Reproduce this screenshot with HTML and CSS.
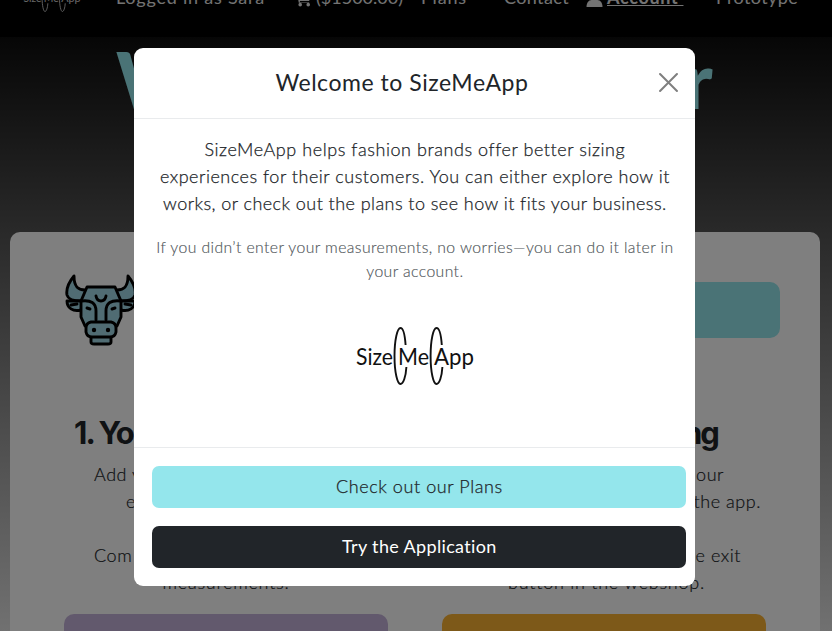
FILE: index.html
```html
<!DOCTYPE html>
<html lang="en">
<head>
<meta charset="utf-8">
<title>SizeMeApp</title>
<link rel="stylesheet" href="styles.css">
</head>
<body>
<svg class="defs" aria-hidden="true">
  <symbol id="logo" viewBox="0 0 120 58">
    <g fill="none" stroke="currentColor" stroke-width="1.9">
      <path d="M50.600 18C49.800 7 48 1 45.500 1C42.300 1 39.500 13 39.500 29S42.300 57 45.500 57C48.200 57 50.800 50 51.400 40"/>
      <path d="M86.800 18C86 7 84.200 1 81.500 1C78.300 1 75.600 13 75.600 29S78.300 57 81.500 57C84.300 57 86.800 50 87.400 40"/>
    </g>
    <g class="logo-text">
      <text x="1" y="38" textLength="37" lengthAdjust="spacingAndGlyphs">Size</text>
      <text x="43" y="38" textLength="31" lengthAdjust="spacingAndGlyphs">Me</text>
      <text x="79" y="38" textLength="40" lengthAdjust="spacingAndGlyphs">App</text>
    </g>
  </symbol>
</svg>
<div class="page">
  <nav class="nav">
    <svg class="nav-logo"><use href="#logo"/></svg>
    <span class="user">Logged in as Sara</span>
    <span class="cart"><svg viewBox="0 0 18 16"><path d="M0 0h3l1 2h13l-2 8H5l.5 1.500H15V12H4L2 1.500H0z"/><circle cx="5.500" cy="14" r="1.900"/><circle cx="14" cy="14" r="1.900"/></svg>($1500.00)</span>
    <span class="plans">Plans</span>
    <span class="contact">Contact</span>
    <span class="account"><svg viewBox="0 0 16 16"><circle cx="8" cy="4" r="4"/><path d="M0 16c0-4 2-7 5-7h6c3 0 5 3 5 7z"/></svg><b>Account&nbsp;</b></span>
    <span>Prototype</span>
  </nav>
  <header class="hero"><span>W</span><span>r</span></header>
  <main class="card">
    <div class="card-top">
      <svg class="bull" viewBox="0 0 72 72">
        <g fill="#a0d8e6" stroke="#000" stroke-width="2.900" stroke-linejoin="round" stroke-linecap="round">
          <path d="M20 16C14 16 9 14 9 2C4 8 1 15 2 21C3 25 8 27 16 27"/>
          <path d="M52 16C58 16 63 14 63 2C68 8 71 15 70 21C69 25 64 27 56 27"/>
          <path d="M17 27H2C2 34 8 38 16 36M55 27H70C70 34 64 38 56 36"/>
          <path d="M22 13H50L56 27V43L52 52H20L16 43V27Z"/>
          <path d="M26 62V68Q26 70 29 70H43Q46 70 46 68V62Z"/>
          <path d="M26 48H46Q51 49 51 54V58Q50 63 45 63H27Q22 63 21 58V54Q21 49 26 48Z"/>
          <path d="M31 22Q32 27 36 27T41 22M16 27Q31 25 31 37V46M56 27Q41 25 41 37V46M6 31L12 30M66 31L60 30" fill="none"/>
          <path d="M22 34L25 35M50 34L47 35"/>
        </g>
        <circle cx="29" cy="56" r="2.200"/><circle cx="43" cy="56" r="2.200"/>
      </svg>
      <div class="cta"></div>
    </div>
    <div class="steps">
      <section class="step left">
        <h2>1. You</h2>
        <p>Add y</p><p class="short">e</p><br>
        <p>Com</p><p class="center">measurements.</p>
        <div class="action purple"></div>
      </section>
      <section class="step right">
        <h2>ng</h2>
        <p class="l1">our</p><p class="l2">the app.</p><br>
        <p class="l3">e exit</p><p class="center">button in the webshop.</p>
        <div class="action gold"></div>
      </section>
    </div>
  </main>
</div>
<div class="backdrop">
  <div class="modal" role="dialog" aria-modal="true">
    <div class="modal-head">
      <h1>Welcome to SizeMeApp</h1>
      <svg class="close" viewBox="0 0 18 18"><path d="M1 1L17 17M17 1L1 17"/></svg>
    </div>
    <div class="modal-body">
      <p class="lead"><span class="a">SizeMeApp helps fashion brands offer better sizing</span><br>experiences for their customers. You can either explore how it<br><span class="c">works, or check out the plans to see how it fits your business.</span></p>
      <p class="note">If you didn’t enter your measurements, no worries—you can do it later in<br>your account.</p>
      <svg class="logo"><use href="#logo"/></svg>
    </div>
    <div class="modal-foot">
      <button class="btn light">Check out our Plans</button>
      <button class="btn dark">Try the Application</button>
    </div>
  </div>
</div>
</body>
</html>
```
FILE: styles.css
```css
* { box-sizing: border-box; }
body { margin: 0; height: 631px; overflow: hidden; font: 18px/27px Lato, "Open Sans", sans-serif; letter-spacing: .38px; color: #212529; }
h1, h2, p { margin: 0; }
.defs { position: absolute; width: 0; height: 0; }
.logo-text { font: 23px Lato, sans-serif; letter-spacing: 0; fill: currentColor; }

.page { height: 631px; overflow: hidden; background: linear-gradient(#000, #e2e2e2); }
.nav { height: 37px; display: flex; align-items: flex-start; background: #000; color: #fff; padding-left: 23px; white-space: nowrap; }
.nav > span { margin-top: -16.5px; opacity: .9; }
.nav-logo { width: 58px; height: 28px; margin-top: -16px; margin-right: 35px; flex: none; opacity: .8; }
.nav .user { width: 179px; letter-spacing: .78px; }
.nav .cart { width: 126px; letter-spacing: 0; }
.nav .plans { width: 83px; letter-spacing: .84px; }
.nav .contact { width: 82px; }
.nav .account { width: 130px; letter-spacing: .7px; }
.account b { text-decoration: underline; text-underline-offset: 1px; }
.nav span svg { width: 17px; height: 16px; fill: #fff; vertical-align: -3px; margin-right: 4px; }

.hero { height: 195px; display: flex; justify-content: space-between; padding: 0 119px 0 116px; font-size: 78px; font-weight: 900; line-height: 84px; color: #94e6ec; }
.card { margin: 0 12px 0 10px; height: 420px; padding: 42px 40px 0 54px; background: #fff; border-radius: 10px; }
.card-top { display: flex; justify-content: space-between; align-items: flex-start; height: 142px; }
.bull { width: 74px; height: 72px; }
.cta { width: 330px; height: 56px; margin-top: 7.5px; border-radius: 10px; background: #94e6ec; }
.steps { display: grid; grid-template-columns: 324px 324px; column-gap: 54px; }
.step h2 { font: 700 31px/34px Inter, sans-serif; letter-spacing: -1.9px; margin-bottom: 11px; }
.step p { white-space: nowrap; font-weight: 300; letter-spacing: .55px; -webkit-text-stroke: .2px; }
.left h2 { padding-left: 10px; }
.left p { padding-left: 30px; }
.left .short { padding-left: 62px; }
.right { text-align: right; }
.right h2 { padding-right: 48px; }
.right .l1 { padding-right: 42px; }
.right .l2 { padding-right: 5px; }
.right .l3 { padding-right: 25px; }
.step .center { padding: 0; text-align: center; letter-spacing: .75px; }
.right .center { padding-left: 5px; }
.action { height: 60px; margin-top: 18px; border-radius: 10px; }
.purple { background: #c5b3da; }
.gold { background: #fab232; }

.backdrop { position: absolute; inset: 0; background: rgba(0, 0, 0, .5); padding-top: 48px; }
.modal { width: 561px; height: 538px; margin-left: 134.4px; background: #fff; border-radius: 9px; }
.modal-head { height: 71px; display: flex; align-items: center; justify-content: flex-end; padding: 0 17px 1px 0; border-bottom: 1px solid #e9ebed; }
.modal-head h1 { width: 253px; margin-right: 131px; font-size: 23px; font-weight: 400; letter-spacing: .54px; white-space: nowrap; }
.close { width: 19px; height: 19px; fill: none; stroke: #7f7f7f; stroke-width: 1.9; stroke-linecap: round; }
.modal-body { height: 329px; padding-top: 17px; text-align: center; border-bottom: 1px solid #e9ebed; white-space: nowrap; }
.lead { margin-bottom: 18px; font-weight: 300; letter-spacing: .52px; -webkit-text-stroke: .25px; }
.lead .a { letter-spacing: .56px; }
.lead .c { letter-spacing: .44px; }
.note { font-size: 15.75px; line-height: 24px; font-weight: 300; letter-spacing: .41px; color: #50565a; -webkit-text-stroke: .15px; }
.logo { width: 120px; height: 58px; margin-top: 44px; color: #111; }
.modal-foot { padding: 18px 9px 0 18px; display: grid; gap: 18px; }
.btn { height: 42px; border: 0; border-radius: 7px; padding: 0 0 2px; font: inherit; }
.light { background: #94e6ec; color: #212529; font-weight: 300; letter-spacing: .59px; -webkit-text-stroke: .25px; }
.dark { background: #212529; color: #fff; letter-spacing: .35px; }
```
